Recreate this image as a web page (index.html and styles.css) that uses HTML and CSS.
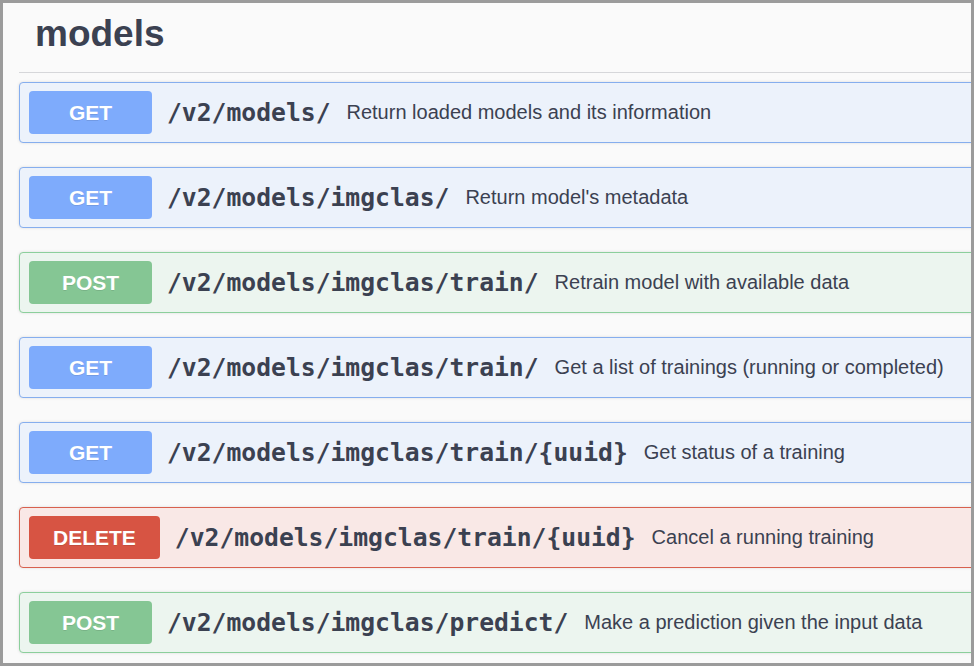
FILE: index.html
```html
<!DOCTYPE html>
<html lang="en">
<head>
<meta charset="utf-8">
<title>models</title>
<link rel="stylesheet" href="styles.css">
</head>
<body>
<div class="frame">
  <div class="tag"><h3 class="tag-title">models</h3></div>
  <div class="ops">
    <div class="op op-get">
      <span class="method">GET</span>
      <span class="path">/v2/models/</span>
      <span class="desc">Return loaded models and its information</span>
    </div>
    <div class="op op-get">
      <span class="method">GET</span>
      <span class="path">/v2/models/imgclas/</span>
      <span class="desc">Return model's metadata</span>
    </div>
    <div class="op op-post">
      <span class="method">POST</span>
      <span class="path">/v2/models/imgclas/train/</span>
      <span class="desc">Retrain model with available data</span>
    </div>
    <div class="op op-get">
      <span class="method">GET</span>
      <span class="path">/v2/models/imgclas/train/</span>
      <span class="desc">Get a list of trainings (running or completed)</span>
    </div>
    <div class="op op-get">
      <span class="method">GET</span>
      <span class="path">/v2/models/imgclas/train/{uuid}</span>
      <span class="desc">Get status of a training</span>
    </div>
    <div class="op op-delete">
      <span class="method">DELETE</span>
      <span class="path">/v2/models/imgclas/train/{uuid}</span>
      <span class="desc">Cancel a running training</span>
    </div>
    <div class="op op-post">
      <span class="method">POST</span>
      <span class="path">/v2/models/imgclas/predict/</span>
      <span class="desc">Make a prediction given the input data</span>
    </div>
  </div>
</div>
</body>
</html>
```

FILE: styles.css
```css
html, body {
  margin: 0;
  padding: 0;
  background: #ffffff;
}

.frame {
  box-sizing: border-box;
  width: 974px;
  height: 666px;
  border: 3px solid #9b9b9b;
  background: #fafafa;
  padding-left: 16px;
  overflow: hidden;
  font-family: "Liberation Sans", Arial, sans-serif;
  color: #3b4151;
}

.tag {
  height: 69px;
  box-sizing: content-box;
  border-bottom: 1px solid #d6d7da;
  padding: 0 0 0 16px;
}

.tag-title {
  margin: 0;
  padding-top: 10px;
  font-size: 37px;
  line-height: 42px;
  font-weight: 700;
  color: #3b4151;
}

.ops {
  display: flex;
  flex-direction: column;
  gap: 24px;
  margin-top: 9px;
  margin-right: -12px;
}

.op {
  display: flex;
  align-items: center;
  height: 43px;
  padding: 8px 9px;
  border: 1px solid;
  border-radius: 4px;
  box-shadow: 0 0 3px rgba(0, 0, 0, 0.12);
}

.method {
  box-sizing: border-box;
  min-width: 123px;
  height: 43px;
  padding: 0 24px;
  border-radius: 4px;
  display: flex;
  align-items: center;
  justify-content: center;
  font-size: 21px;
  font-weight: 700;
  color: #ffffff;
  text-shadow: 0 1px 0 rgba(0, 0, 0, 0.1);
  flex: none;
}

.path {
  padding-left: 15px;
  font-family: "DejaVu Sans Mono", monospace;
  font-weight: 700;
  font-size: 24.7px;
  color: #3b4151;
  white-space: nowrap;
}

.desc {
  padding-left: 16px;
  font-size: 20px;
  color: #3b4151;
  white-space: nowrap;
}

.op-get {
  background: #ecf2fb;
  border-color: #86aeee;
}
.op-get .method {
  background: #7eabfc;
}

.op-post {
  background: #ecf5ef;
  border-color: #8ccf9c;
}
.op-post .method {
  background: #85c694;
}

.op-delete {
  background: #f9e8e6;
  border-color: #d8604e;
}
.op-delete .method {
  background: #d75443;
}
```
